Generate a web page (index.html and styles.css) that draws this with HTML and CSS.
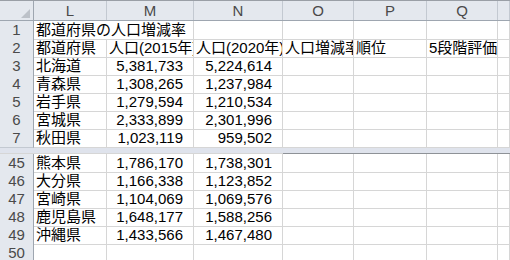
FILE: index.html
```html
<!DOCTYPE html>
<html lang="ja">
<head>
    <meta charset="UTF-8">
    <title>都道府県の人口増減率</title>
    <link rel="stylesheet" href="styles.css">
</head>
<body>

<div class="sheet">
    <div class="row head">
        <div class="corner"></div>
        <div class="col">L</div>
        <div class="col">M</div>
        <div class="col">N</div>
        <div class="col">O</div>
        <div class="col">P</div>
        <div class="col">Q</div>
        <div class="col"></div>
    </div>

    <div class="row">
        <div class="num">1</div>
        <div class="cell wide">都道府県の人口増減率</div>
        <div class="cell"></div>
        <div class="cell"></div>
        <div class="cell"></div>
        <div class="cell"></div>
        <div class="cell"></div>
    </div>
    <div class="row">
        <div class="num">2</div>
        <div class="cell">都道府県</div>
        <div class="cell">人口(2015年)</div>
        <div class="cell">人口(2020年)</div>
        <div class="cell">人口増減率</div>
        <div class="cell">順位</div>
        <div class="cell">5段階評価</div>
        <div class="cell"></div>
    </div>
    <div class="row">
        <div class="num">3</div>
        <div class="cell">北海道</div>
        <div class="cell val">5,381,733</div>
        <div class="cell val">5,224,614</div>
        <div class="cell"></div><div class="cell"></div><div class="cell"></div><div class="cell"></div>
    </div>
    <div class="row">
        <div class="num">4</div>
        <div class="cell">青森県</div>
        <div class="cell val">1,308,265</div>
        <div class="cell val">1,237,984</div>
        <div class="cell"></div><div class="cell"></div><div class="cell"></div><div class="cell"></div>
    </div>
    <div class="row">
        <div class="num">5</div>
        <div class="cell">岩手県</div>
        <div class="cell val">1,279,594</div>
        <div class="cell val">1,210,534</div>
        <div class="cell"></div><div class="cell"></div><div class="cell"></div><div class="cell"></div>
    </div>
    <div class="row">
        <div class="num">6</div>
        <div class="cell">宮城県</div>
        <div class="cell val">2,333,899</div>
        <div class="cell val">2,301,996</div>
        <div class="cell"></div><div class="cell"></div><div class="cell"></div><div class="cell"></div>
    </div>
    <div class="row">
        <div class="num">7</div>
        <div class="cell">秋田県</div>
        <div class="cell val">1,023,119</div>
        <div class="cell val">959,502</div>
        <div class="cell"></div><div class="cell"></div><div class="cell"></div><div class="cell"></div>
    </div>

    <!-- 分割バー -->
    <div class="row split">
        <div></div><div></div><div></div><div></div>
        <div class="edge"></div><div class="edge"></div><div class="edge"></div><div class="edge"></div>
    </div>

    <div class="row">
        <div class="num">45</div>
        <div class="cell">熊本県</div>
        <div class="cell val">1,786,170</div>
        <div class="cell val">1,738,301</div>
        <div class="cell"></div><div class="cell"></div><div class="cell"></div><div class="cell"></div>
    </div>
    <div class="row">
        <div class="num">46</div>
        <div class="cell">大分県</div>
        <div class="cell val">1,166,338</div>
        <div class="cell val">1,123,852</div>
        <div class="cell"></div><div class="cell"></div><div class="cell"></div><div class="cell"></div>
    </div>
    <div class="row">
        <div class="num">47</div>
        <div class="cell">宮崎県</div>
        <div class="cell val">1,104,069</div>
        <div class="cell val">1,069,576</div>
        <div class="cell"></div><div class="cell"></div><div class="cell"></div><div class="cell"></div>
    </div>
    <div class="row">
        <div class="num">48</div>
        <div class="cell">鹿児島県</div>
        <div class="cell val">1,648,177</div>
        <div class="cell val">1,588,256</div>
        <div class="cell"></div><div class="cell"></div><div class="cell"></div><div class="cell"></div>
    </div>
    <div class="row">
        <div class="num">49</div>
        <div class="cell">沖縄県</div>
        <div class="cell val">1,433,566</div>
        <div class="cell val">1,467,480</div>
        <div class="cell"></div><div class="cell"></div><div class="cell"></div><div class="cell"></div>
    </div>
    <div class="row">
        <div class="num">50</div>
        <div class="cell"></div><div class="cell"></div><div class="cell"></div>
        <div class="cell"></div><div class="cell"></div><div class="cell"></div><div class="cell"></div>
    </div>
</div>

</body>
</html>
```

FILE: styles.css
```css
* {
    box-sizing: border-box;
}
html, body {
    margin: 0;
    height: 100%;
    overflow: hidden;
    background: white;
}
.sheet {
    font-family: "Liberation Sans", "Noto Sans CJK JP", sans-serif;
    font-size: 15px;
    color: #000;
    border-top: 1px solid #9a9fa6;
}
.row {
    display: grid;
    grid-template-columns: 34px 73px 87px 89px 71px 73px 71px 1fr;
    height: 18px;
}
.head {
    height: 20px;
    background: #e4e8ee;
    border-bottom: 1px solid #9ea6b0;
}
.col {
    border-right: 1px solid #c3c9d1;
    text-align: center;
    line-height: 19px;
    color: #4a4a4a;
}
.corner {
    display: flex;
    align-items: flex-end;
    justify-content: flex-end;
    padding: 0 3px 2px 0;
    border-right: 1px solid #9ea6b0;
}
.corner::after {
    content: "";
    width: 9px;
    height: 9px;
    background: #bcc1c8;
    clip-path: polygon(100% 0, 100% 100%, 0 100%);
}
.num {
    background: #e4e8ee;
    border-right: 1px solid #9ea6b0;
    border-bottom: 1px solid #c3c9d1;
    text-align: center;
    line-height: 18px;
    color: #4a4a4a;
}
.cell {
    border-right: 1px solid #d6d6d6;
    border-bottom: 1px solid #d6d6d6;
    padding: 0 2px;
    line-height: 17px;
    white-space: nowrap;
    overflow: hidden;
}
.cell.wide {
    grid-column: span 2;
    overflow: visible;
}
.cell.val {
    text-align: right;
    padding-right: 10px;
}
.split {
    height: 7px;
    background: #dfe3ec;
}
.split > div {
    border-bottom: 1px solid #d6d6d6;
}
.split > .edge {
    border-bottom-color: #8e9297;
}
```
